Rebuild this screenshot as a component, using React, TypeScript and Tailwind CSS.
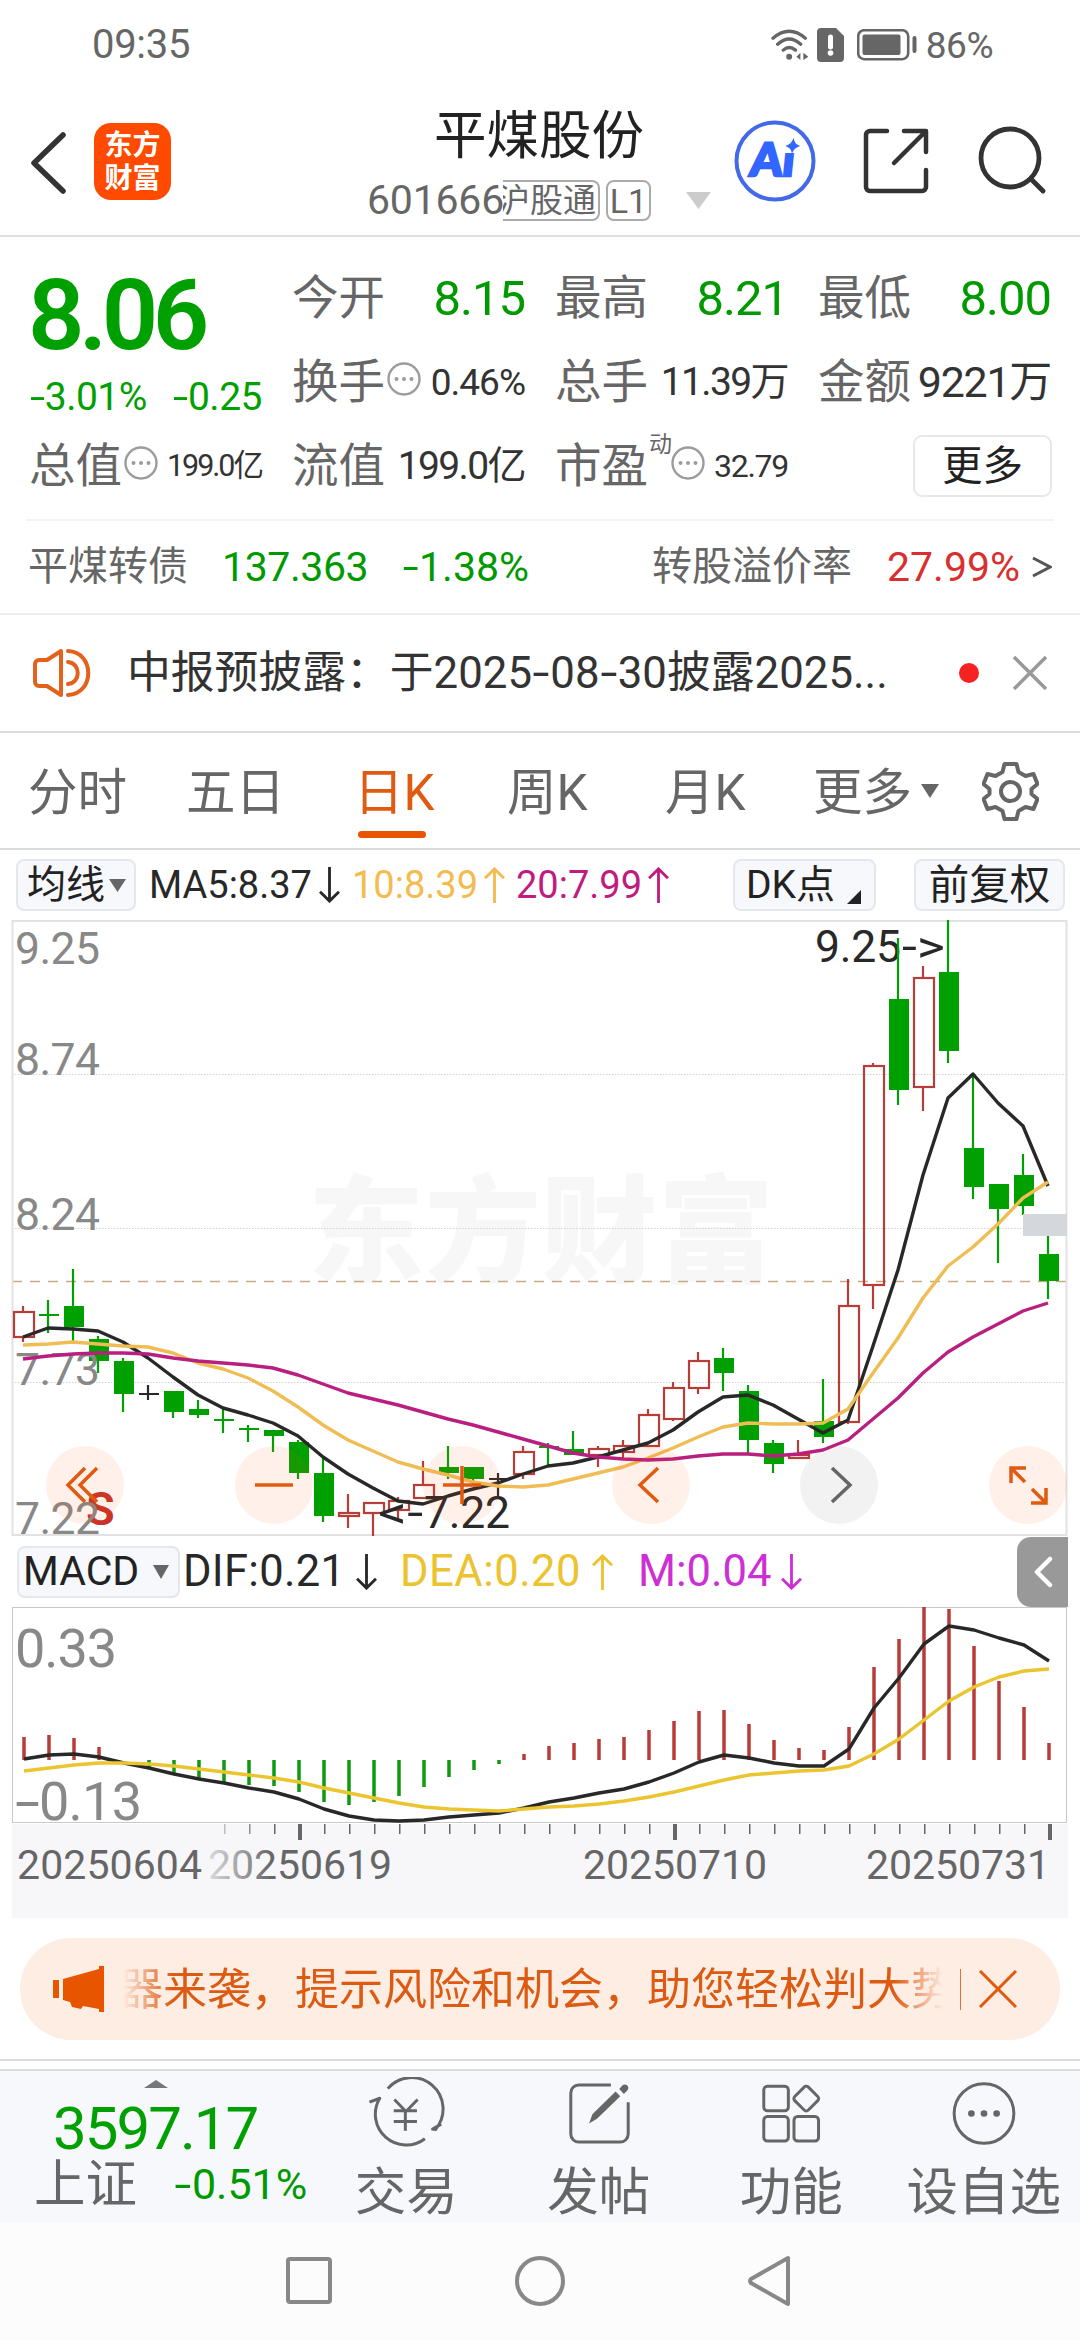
import clsx           from "clsx"
import { ReactNode } from "react"

type Candle = [ kind: "up" | "down" | "flat", high: number, top: number, bottom: number, low: number ]

const STEP = 25
const FIRST_X = 23
const GREEN = "#00a000"
const RED = "#b83c38"
const INK = "#282828"

// high wick, body top, body bottom, low wick
const candles: Candle[] = [
    [ "up", 1306, 1312, 1337, 1342 ],
    [ "down", 1300, 1314, 1316, 1333 ],
    [ "down", 1269, 1306, 1327, 1341 ],
    [ "down", 1336, 1339, 1361, 1373 ],
    [ "down", 1358, 1361, 1394, 1412 ],
    [ "flat", 1385, 1393, 1395, 1400 ],
    [ "down", 1391, 1391, 1412, 1418 ],
    [ "down", 1400, 1409, 1415, 1418 ],
    [ "down", 1409, 1419, 1421, 1433 ],
    [ "down", 1425, 1428, 1430, 1442 ],
    [ "down", 1430, 1430, 1436, 1452 ],
    [ "down", 1440, 1442, 1473, 1479 ],
    [ "down", 1458, 1473, 1516, 1522 ],
    [ "up", 1494, 1513, 1516, 1528 ],
    [ "up", 1503, 1503, 1513, 1536 ],
    [ "up", 1497, 1501, 1510, 1518 ],
    [ "up", 1461, 1485, 1498, 1498 ],
    [ "down", 1446, 1467, 1473, 1479 ],
    [ "down", 1467, 1467, 1479, 1485 ],
    [ "flat", 1473, 1478, 1480, 1497 ],
    [ "up", 1446, 1452, 1474, 1479 ],
    [ "down", 1443, 1446, 1448, 1465 ],
    [ "down", 1431, 1449, 1455, 1455 ],
    [ "up", 1446, 1449, 1455, 1467 ],
    [ "up", 1440, 1446, 1452, 1458 ],
    [ "up", 1409, 1415, 1446, 1446 ],
    [ "up", 1382, 1388, 1419, 1421 ],
    [ "up", 1352, 1361, 1388, 1394 ],
    [ "down", 1348, 1358, 1373, 1391 ],
    [ "down", 1385, 1391, 1440, 1455 ],
    [ "down", 1440, 1443, 1464, 1473 ],
    [ "up", 1440, 1455, 1458, 1458 ],
    [ "down", 1379, 1421, 1437, 1443 ],
    [ "up", 1279, 1306, 1422, 1424 ],
    [ "up", 1063, 1066, 1285, 1309 ],
    [ "down", 938, 999, 1090, 1105 ],
    [ "up", 966, 978, 1087, 1111 ],
    [ "down", 920, 972, 1051, 1063 ],
    [ "down", 1075, 1148, 1187, 1199 ],
    [ "down", 1184, 1184, 1209, 1263 ],
    [ "down", 1154, 1175, 1206, 1215 ],
    [ "down", 1236, 1254, 1281, 1299 ],
]

const ma5 = [ 1337, 1328, 1329, 1331, 1342, 1358, 1377, 1395, 1408, 1415, 1423, 1436, 1457, 1474, 1488, 1501, 1504, 1496, 1489, 1483, 1474, 1466, 1463, 1457, 1450, 1443, 1430, 1412, 1397, 1395, 1405, 1419, 1433, 1420, 1346, 1270, 1175, 1098, 1074, 1103, 1126, 1186 ]
const ma10 = [ 1345, 1344, 1342, 1344, 1346, 1347, 1353, 1363, 1369, 1378, 1391, 1407, 1425, 1440, 1451, 1462, 1469, 1475, 1482, 1486, 1487, 1485, 1479, 1473, 1467, 1458, 1448, 1437, 1427, 1423, 1424, 1424, 1423, 1409, 1373, 1338, 1298, 1266, 1247, 1224, 1198, 1182 ]
const ma20 = [ 1359, 1356, 1354, 1353, 1353, 1354, 1358, 1361, 1363, 1365, 1368, 1375, 1384, 1393, 1399, 1405, 1412, 1419, 1425, 1432, 1439, 1446, 1453, 1457, 1459, 1460, 1459, 1456, 1454, 1454, 1456, 1454, 1450, 1440, 1419, 1398, 1373, 1352, 1337, 1324, 1311, 1303 ]

const ZERO = 1760
const macd = [ 1737, 1735, 1738, 1747, 1760, 1768, 1774, 1780, 1782, 1785, 1786, 1792, 1802, 1805, 1802, 1796, 1787, 1777, 1770, 1764, 1754, 1746, 1743, 1739, 1737, 1730, 1721, 1711, 1710, 1724, 1740, 1748, 1750, 1727, 1667, 1639, 1607, 1609, 1646, 1681, 1707, 1743 ]
const dif = [ 1759, 1755, 1754, 1757, 1763, 1768, 1774, 1779, 1783, 1788, 1792, 1799, 1809, 1816, 1820, 1821, 1820, 1817, 1815, 1813, 1808, 1802, 1798, 1793, 1789, 1782, 1773, 1762, 1755, 1758, 1763, 1766, 1766, 1749, 1708, 1678, 1644, 1626, 1630, 1638, 1645, 1661 ]
const dea = [ 1771, 1768, 1765, 1763, 1763, 1764, 1766, 1769, 1772, 1775, 1778, 1782, 1788, 1793, 1798, 1803, 1807, 1809, 1810, 1811, 1809, 1807, 1806, 1804, 1801, 1797, 1792, 1786, 1780, 1775, 1773, 1771, 1770, 1766, 1754, 1739, 1720, 1701, 1687, 1677, 1671, 1669 ]

const toPoints = (values: number[], start = FIRST_X) => values.map((y, i) => `${ start + i * STEP },${ y }`).join(" ")

// Roboto's hyphen is short next to its figures, so it is stretched a little
function Dash() {
    return <span className="mx-[0.07em] inline-block scale-x-140">-</span>
}

function Arrow({ up = false, className }: Readonly<{ up?: boolean; className?: string }>) {
    return (
        <svg viewBox="0 0 22 38" fill="none" stroke="currentColor" strokeWidth="3" className={ clsx("h-[36px] w-[21px] shrink-0", className) }>
            <path d={ up ? "M11 38V2M1 12 11 2l10 10" : "M11 0v36M1 26l10 10 10-10" } />
        </svg>
    )
}

function Caret({ className }: Readonly<{ className?: string }>) {
    return (
        <svg viewBox="0 0 18 14" fill="currentColor" preserveAspectRatio="none" className={ clsx("shrink-0", className) }>
            <path d="M0 0h18L9 14z" />
        </svg>
    )
}

function Dots() {
    return (
        <svg viewBox="0 0 34 34" className="-mt-[6px] ml-[2px] size-[34px] shrink-0">
            <circle cx="17" cy="17" r="15.5" fill="none" stroke="#9c9c9c" strokeWidth="2.4" />
            <g fill="#9c9c9c">
                <circle cx="9.5" cy="17" r="2" />
                <circle cx="17" cy="17" r="2" />
                <circle cx="24.5" cy="17" r="2" />
            </g>
        </svg>
    )
}

function StatusBar() {
    return (
        <div className="flex h-[90px] items-center justify-between pr-[87px] pl-[92px] text-[#666]">
            <span className="text-[40px] tracking-[-0.3px]">09:35</span>
            <div className="flex items-center">
                <svg viewBox="0 0 110 100" className="h-[33px] w-[37px]" fill="none" stroke="currentColor" strokeWidth="10" strokeLinecap="round">
                    <path d="M5 28Q54-14 103 28M19 46Q54 14 89 46M36 64Q54 48 73 64" />
                    <circle cx="54" cy="84" r="9" fill="currentColor" stroke="none" />
                    <path d="M76 84l12-12v22zM112 84 97 72v22z" fill="currentColor" stroke="none" />
                </svg>
                <svg viewBox="0 0 27 34" className="ml-[9px] h-[34px] w-[27px]">
                    <path d="M4 0h15l8 8v22a4 4 0 0 1-4 4H4a4 4 0 0 1-4-4V4a4 4 0 0 1 4-4z" fill="currentColor" />
                    <path d="M13.500 9v10" stroke="white" strokeWidth="5" strokeLinecap="round" />
                    <circle cx="13.500" cy="25" r="2.800" fill="white" />
                </svg>
                <svg viewBox="0 0 60 32" className="ml-[13px] h-[32px] w-[60px]">
                    <rect x="1.200" y="1.200" width="50" height="29" rx="6" fill="none" stroke="currentColor" strokeWidth="2.600" />
                    <rect x="5.500" y="5.500" width="38" height="20.500" rx="2" fill="currentColor" />
                    <path d="M57.500 9v13" stroke="currentColor" strokeWidth="4" strokeLinecap="round" />
                </svg>
                <span className="ml-[9px] text-[37px] tracking-[-0.5px]">86%</span>
            </div>
        </div>
    )
}

function Header() {
    return (
        <header className="flex h-[147px] items-start border-b-2 border-[#dedede]">
            <svg viewBox="0 0 36 62" className="mt-[42px] ml-[30px] h-[62px] w-[36px]" fill="none" stroke="#333" strokeWidth="5.500" strokeLinecap="round" strokeLinejoin="round">
                <path d="M33 3 4 31l29 28" />
            </svg>
            <div className="mt-[33px] ml-[28px] flex size-[77px] flex-col items-center justify-center rounded-[17px] bg-[#ff4a00] text-[28px] leading-[33px] font-bold text-white">
                <span>东方</span>
                <span>财富</span>
            </div>
            <div className="mt-[17px] ml-[196px] flex w-[344px] flex-col items-center">
                <h1 className="text-[52.5px] leading-[58px] text-[#222]">平煤股份</h1>
                <div className="mt-[15px] flex w-full items-center text-[#666]">
                    <span className="w-[136px] text-[41px] whitespace-nowrap tracking-[-0.2px]">601666</span>
                    <span className="flex h-[41px] w-[97px] items-center justify-end overflow-hidden rounded-r-[8px] border-2 border-l-0 border-[#aaa] pr-[2px] text-[33px] whitespace-nowrap">沪股通</span>
                    <span className="ml-[6px] flex h-[41px] w-[45px] items-center justify-center rounded-[8px] border-2 border-[#aaa] text-[34px]">L1</span>
                    <Caret className="ml-auto h-[17px] w-[25px] text-[#ccc]" />
                </div>
            </div>
            <svg viewBox="0 0 82 82" className="mt-[30px] ml-[23px] size-[82px]">
                <circle cx="41" cy="41" r="38.5" fill="none" stroke="#4169e8" strokeWidth="4" />
                <g transform="translate(6 0) skewX(-6)" fill="#3366ff">
                    <text x="15" y="56.5" textLength="44" lengthAdjust="spacingAndGlyphs" stroke="#3366ff" strokeWidth="2.500" className="font-[Lato] text-[46px] font-black">Ai</text>
                    <path d="M46.500 17h15v16h-15z" fill="white" />
                    <path d="M55.500 19.500q1.500 5 6 6.500-4.500 1.500-6 6-1.500-4.500-6-6 4.500-1.500 6-6.500z" stroke="#3366ff" />
                </g>
            </svg>
            <svg viewBox="0 0 66 66" className="mt-[38px] ml-[47px] size-[66px]" fill="none" stroke="#333" strokeWidth="4.500" strokeLinecap="round" strokeLinejoin="round">
                <path d="M24 3H7a4 4 0 0 0-4 4v52a4 4 0 0 0 4 4h52a4 4 0 0 0 4-4V42M41 3h22v21M62 4 31 35" />
            </svg>
            <svg viewBox="0 0 68 68" className="mt-[36px] ml-[49px] size-[68px]" fill="none" stroke="#333" strokeWidth="4.800" strokeLinecap="round">
                <circle cx="32" cy="32" r="29" />
                <path d="m53 53 12 12" />
            </svg>
        </header>
    )
}

function Cell({ label, value, className, color = "text-[#333]" }: Readonly<{ label: ReactNode; value: string; className: string; color?: string }>) {
    return (
        <div className="flex h-[84px] items-center justify-between whitespace-nowrap">
            <span className="flex items-center text-[46.5px] text-[#666]">{ label }</span>
            <span className={ clsx(color, className) }>{ value }</span>
        </div>
    )
}

function Quote() {
    return (
        <section className="px-[29px]">
            <div className="grid grid-cols-[233px_233px_233px_233px] gap-x-[30px] pt-[19px]">
                <div className="row-span-2 flex flex-col text-[#00a000]">
                    <strong className="mt-[10px] -ml-px text-[99px] font-semibold tracking-[-5.5px]">8.06</strong>
                    <div className="mt-[13px] flex justify-between text-[39px] tracking-[-0.5px]">
                        <span><Dash />3.01%</span>
                        <span><Dash />0.25</span>
                    </div>
                </div>
                <Cell label="今开" value="8.15" color="text-[#009a00]" className="text-[49px] tracking-[-1px]" />
                <Cell label="最高" value="8.21" color="text-[#009a00]" className="text-[49px] tracking-[-1px]" />
                <Cell label="最低" value="8.00" color="text-[#009a00]" className="text-[49px] tracking-[-1px]" />
                <Cell label={ <>换手<Dots /></> } value="0.46%" className="text-[37px] tracking-[-1px]" />
                <Cell label="总手" value="11.39万" className="text-[39px] tracking-[-1.600px]" />
                <Cell label="金额" value="9221万" className="text-[43px] tracking-[-1.300px]" />
                <Cell label={ <>总值<Dots /></> } value="199.0亿" className="text-[30.500px] tracking-[-2px]" />
                <Cell label="流值" value="199.0亿" className="text-[39px] tracking-[-1.600px]" />
                <Cell label={ <>市盈<small className="-mr-[3px] -mt-[44px] ml-px text-[23px]">动</small><Dots /></> } value="32.79" className="text-[32px] tracking-[-1.3px]" />
                <div className="flex items-center justify-end">
                    <button type="button" className="-mr-px h-[62px] w-[139px] rounded-[9px] border-2 border-[#e8e8e8] text-[40.5px] text-[#222]">更多</button>
                </div>
            </div>
            <div className="-mx-[3px] mt-[11px] h-[2px] bg-[#f4f4f4]" />
            <div className="flex h-[92px] items-center text-[40px] whitespace-nowrap text-[#666]">
                <span className="-ml-px">平煤转债</span>
                <span className="ml-[34px] w-[146px] text-[41px] tracking-[-0.4px] text-[#009a00]">137.363</span>
                <span className="ml-[34px] text-[41px] text-[#009a00]"><Dash />1.38%</span>
                <span className="ml-auto">转股溢价率</span>
                <span className="ml-[35px] text-[41px] text-[#d83030]">27.99%</span>
                <svg viewBox="0 0 20 22" className="-mr-px ml-[12px] h-[22px] w-[20px]" fill="none" stroke="#555" strokeWidth="3">
                    <path d="m1 2 17 9-17 9" />
                </svg>
            </div>
        </section>
    )
}

function Notice() {
    return (
        <div className="flex h-[120px] items-center border-y-2 border-t-[#eeeeee] border-b-[#dcdcdc] pr-[33px] pl-[33px]">
            <svg viewBox="0 0 58 50" className="h-[50px] w-[58px] shrink-0" fill="none" stroke="#e2611c" strokeWidth="4" strokeLinejoin="round" strokeLinecap="round">
                <path d="M28 3v44L14 38H6a4 4 0 0 1-4-4V16a4 4 0 0 1 4-4h8z" />
                <path d="M35 3c27 1 27 43 0 44M35 14c13 1 13 21 0 22" />
            </svg>
            <p className="ml-[36px] w-[770px] pt-[2px] text-[43.8px] whitespace-nowrap text-[#333]">中报预披露：于2025<Dash />08<Dash />30披露2025...</p>
            <span className="ml-auto size-[20px] rounded-full bg-[#f52222]" />
            <svg viewBox="0 0 34 34" className="ml-[34px] size-[34px]" stroke="#999" strokeWidth="3.500">
                <path d="m1 1 32 32M33 1 1 33" />
            </svg>
        </div>
    )
}

const tabs = [
    { label: "分时", className: "ml-[28px] w-[158px]" },
    { label: "五日", className: "w-[168px]" },
    { label: "日K", className: "w-[153px]", active: true },
    { label: "周K", className: "w-[158px]" },
    { label: "月K", className: "w-[148px]" },
]

function Tabs() {
    return (
        <nav className="flex h-[117px] items-center border-b-2 border-[#dcdcdc] text-[49.5px] text-[#666]">
            { tabs.map(tab => (
                <div key={ tab.label } className={ clsx("shrink-0 pt-[7px]", tab.className, tab.active && "text-[#e05a10]") }>
                    <span className="relative">
                        { tab.label }
                        { tab.active && <span className="absolute -bottom-[16px] left-[4px] h-[7px] w-[68px] rounded-full bg-[#e85500]" /> }
                    </span>
                </div>
            )) }
            <span className="pt-[7px]">更多</span>
            <Caret className="ml-[9px] h-[14px] w-[18px]" />
            <svg viewBox="0 0 56 60" className="ml-[43px] h-[60px] w-[57px]" fill="none" stroke="currentColor" strokeWidth="4" strokeLinejoin="round">
                <path d="M22 3h12l2 8 7 4 8-2 4 10-6 5v5l6 5-4 10-8-2-7 4-2 8H22l-2-8-7-4-8 2-4-10 6-5v-5l-6-5 4-10 8 2 7-4z" />
                <circle cx="28" cy="30.500" r="9.500" />
            </svg>
        </nav>
    )
}

function ChartButton({ children, muted = false }: Readonly<{ children: ReactNode; muted?: boolean }>) {
    return (
        <button type="button" className={ clsx("size-[78px] rounded-full", muted ? "bg-[#808080]/10 text-[#666]" : "bg-[#ff5a10]/9 text-[#e05a10]") }>
            <svg viewBox="0 0 78 78" fill="none" stroke="currentColor" strokeWidth="3.5">{ children }</svg>
        </button>
    )
}

function MovingAverages() {
    return (
        <div className="flex h-[70px] items-center text-[38px] whitespace-nowrap">
            <button type="button" className="ml-[16px] flex h-[52px] w-[120px] items-center rounded-[8px] border-2 border-[#e4e7ec] bg-[#f7f8fb] pl-[9px] text-[39px] text-[#222]">
                均线<Caret className="ml-[4px] h-[13px] w-[17px] text-[#666]" />
            </button>
            <span className="ml-[13px] w-[170px] text-[#282828]">MA5:8.37</span>
            <Arrow className="text-[#282828]" />
            <span className="ml-[12px] w-[132px] text-[#f3bb50]">10:8.39</span>
            <Arrow up className="text-[#f3bb50]" />
            <span className="ml-[11px] w-[132px] text-[#c01c80]">20:7.99</span>
            <Arrow up className="text-[#c01c80]" />
            <button type="button" className="ml-auto flex h-[52px] w-[143px] items-center rounded-[8px] border-2 border-[#e4e7ec] bg-[#f7f8fb] pl-[11px] text-[39px] text-[#222]">
                DK点
                <svg viewBox="0 0 14 14" className="mt-[24px] ml-[12px] size-[14px] shrink-0"><path d="M14 0v14H0z" fill="#222" /></svg>
            </button>
            <button type="button" className="mr-[15px] ml-[38px] h-[52px] w-[151px] rounded-[8px] border-2 border-[#e4e7ec] bg-[#f7f8fb] text-[40.500px] text-[#222]">前复权</button>
        </div>
    )
}

function CandleChart() {
    return (
        <div className="relative h-[616px]">
            <svg viewBox="0 920 1080 616" className="h-[616px] w-[1080px]" fill="none">
                <text x="308" y="1273" textLength="466" fill="#f7f7f7" className="text-[116px] font-black">东方财富</text>
                <g stroke="#d2d2d2" strokeWidth="1" strokeDasharray="1.500 1.500">
                    <path d="M12 1074.500H1067M12 1228.500H1067M12 1382.500H1067" />
                </g>
                <path d="M12 1281.500H1067" stroke="#c9a982" strokeWidth="1.300" strokeDasharray="10 8" />
                <rect x="12.500" y="921" width="1054" height="614" stroke="#e2e2e2" strokeWidth="2" />
                <g fill={ INK } className="text-[44.500px]">
                    <text x="815" y="962" textLength="86">9.25</text>
                    <text x="902" y="962" textLength="43" lengthAdjust="spacingAndGlyphs">-&gt;</text>
                </g>
                { candles.map(([ kind, high, top, bottom, low ], i) => {
                    const x = FIRST_X + i * STEP
                    if (kind === "up") {
                        return (
                            <g key={ i } stroke={ RED } strokeWidth="2.200">
                                <path d={ `M${ x } ${ high }V${ top }M${ x } ${ bottom }V${ low }` } />
                                <rect x={ x - 9 } y={ top } width="20" height={ bottom - top } />
                            </g>
                        )
                    }
                    const color = kind === "down" ? GREEN : INK
                    return (
                        <g key={ i }>
                            <path d={ `M${ x } ${ high }V${ low }` } stroke={ color } strokeWidth="2.200" />
                            <rect x={ x - 9 } y={ top } width="20" height={ bottom - top } fill={ color } />
                        </g>
                    )
                }) }
                <rect x="1023" y="1214" width="44" height="22" fill="#d4d7dc" />
                <g fill="#888" className="text-[44.500px]">
                    <text x="15" y="964" textLength="85">9.25</text>
                    <text x="15" y="1075" textLength="85">8.74</text>
                    <text x="15" y="1230" textLength="85">8.24</text>
                    <text x="15" y="1385" textLength="85">7.73</text>
                </g>
                <g strokeWidth="3.400" strokeLinejoin="round">
                    <polyline points={ toPoints(ma5) } stroke={ INK } />
                    <polyline points={ toPoints(ma10) } stroke="#f0bd55" />
                    <polyline points={ toPoints(ma20) } stroke="#b91f7e" />
                </g>
                <text x="86" y="1525" fill="#c83228" className="text-[47px] font-semibold">S</text>
                <text x="15" y="1534" textLength="85" fill="#888" className="text-[44.500px]">7.22</text>
                <g fill={ INK } className="text-[44.500px]">
                    <text x="378" y="1528" textLength="45" lengthAdjust="spacingAndGlyphs">&lt;-</text>
                    <text x="424" y="1528" textLength="86">7.22</text>
                </g>
            </svg>
            <div className="absolute right-[13px] bottom-[12px] left-[46px] flex justify-between">
                <ChartButton><path d="M39 22 22 39l17 17M51 22 34 39l17 17" /></ChartButton>
                <ChartButton><path d="M20 39h38" /></ChartButton>
                <ChartButton><path d="M20 39h38M39 20v38" /></ChartButton>
                <ChartButton><path d="M46 22 28 39l18 17" /></ChartButton>
                <ChartButton muted><path d="m32 22 18 17-18 17" /></ChartButton>
                <ChartButton><path d="M37 22H22v15M22 22l14 14M57 42v15H42M57 57 43 43" /></ChartButton>
            </div>
        </div>
    )
}

function MacdHeader() {
    return (
        <div className="flex h-[71px] items-center text-[43.500px] whitespace-nowrap">
            <button type="button" className="ml-[17px] flex h-[52px] w-[163px] items-center rounded-[8px] border-2 border-[#e4e7ec] bg-[#f7f8fb] pl-[4px] text-[41px] text-[#222]">
                MACD<Caret className="ml-auto mr-[9px] h-[14px] w-[16px] text-[#666]" />
            </button>
            <span className="ml-[3px] w-[173px] tracking-[0.3px] text-[#282828]">DIF:0.21</span>
            <Arrow className="text-[#282828]" />
            <span className="ml-[23px] w-[192px] tracking-[0.5px] text-[#ecc32e]">DEA:0.20</span>
            <Arrow up className="text-[#ecc32e]" />
            <span className="ml-[25px] w-[143px] text-[#cc30d4]">M:0.04</span>
            <Arrow className="text-[#cc30d4]" />
            <button type="button" className="mr-[12px] ml-auto flex h-[70px] w-[51px] items-center justify-center rounded-l-[14px] bg-[#999]">
                <svg viewBox="0 0 20 32" className="h-[32px] w-[20px]" fill="none" stroke="white" strokeWidth="4.500" strokeLinecap="round" strokeLinejoin="round">
                    <path d="M17 3 4 16l13 13" />
                </svg>
            </button>
        </div>
    )
}

function MacdChart() {
    return (
        <svg viewBox="0 1607 1080 217" className="h-[217px] w-[1080px]" fill="none">
            <rect x="12.500" y="1607.500" width="1054" height="215" stroke="#c8c8c8" />
            { macd.map((y, i) => (
                <path key={ i } d={ `M${ 24 + i * STEP } ${ ZERO }V${ y }` } stroke={ y < ZERO ? RED : "#109810" } strokeWidth="3.500" />
            )) }
            <g fill="#888" className="text-[54px]">
                <text x="15" y="1667" textLength="102">0.33</text>
                <text x="15" y="1820" textLength="25" lengthAdjust="spacingAndGlyphs">-</text>
                <text x="39" y="1820" textLength="103">0.13</text>
            </g>
            <g strokeWidth="3.400" strokeLinejoin="round">
                <polyline points={ toPoints(dif, 24) } stroke={ INK } />
                <polyline points={ toPoints(dea, 24) } stroke="#eac530" />
            </g>
        </svg>
    )
}

function DateAxis() {
    const ticks = Array.from({ length: 34 }, (_, i) => i + 8)
    return (
        <div className="mx-[12px] h-[94px] bg-[#f7f7fa]">
            <svg viewBox="12 1824 1056 94" className="h-[94px] w-[1056px]">
                <defs>
                    <linearGradient id="fade" gradientUnits="userSpaceOnUse" x1="205" x2="272" y1="0" y2="0">
                        <stop offset="0" stopColor="#666" stopOpacity="0.15" />
                        <stop offset="1" stopColor="#666" />
                    </linearGradient>
                </defs>
                { ticks.map(i => {
                    const major = i === 11 || i === 26 || i === 41
                    return <rect key={ i } x={ 24 + i * STEP - (major ? 1 : 0) } y="1824" width={ major ? 4 : 1.5 } height={ major ? 16 : 10 } fill={ i < 11 ? "url(#fade)" : "#666" } />
                }) }
                <g fill="#666" className="text-[41px]">
                    <text x="17" y="1879" textLength="185">20250604</text>
                    <text x="208" y="1879" textLength="184" fill="url(#fade)">20250619</text>
                    <text x="583" y="1879" textLength="184">20250710</text>
                    <text x="866" y="1879" textLength="184">20250731</text>
                </g>
            </svg>
        </div>
    )
}

function Banner() {
    return (
        <div className="mx-[20px] mt-[20px] flex h-[102px] items-center rounded-full bg-[#fdede3] text-[#dd5a12]">
            <svg viewBox="0 0 52 46" className="ml-[33px] h-[46px] w-[52px] shrink-0" fill="#e85500">
                <path d="M0 14h6v18H0zM10 13 46 3V0h5v46h-5v-3l-16-3-2 3-9-2-2-5-7-2z" />
            </svg>
            <p className="ml-[18px] w-[820px] overflow-hidden mask-x-from-94% mask-x-to-100% pt-[2px] text-[44px] leading-[60px] whitespace-nowrap">
                <span className="-ml-[4px]">器来袭，提示风险和机会，助您轻松判大势</span>
            </p>
            <span className="ml-[17px] h-[41px] w-px bg-[#e0703a]" />
            <svg viewBox="0 0 38 38" className="ml-[18px] size-[38px]" stroke="#e2580c" strokeWidth="3">
                <path d="m1 1 36 36M37 1 1 37" />
            </svg>
        </div>
    )
}

const actions = [
    {
        label: "交易",
        icon: <path d="M65 35A93 93 0 0 1 209 158l-9-1 26-15M10 76l31-12A93 93 0 0 0 177 186M85 68l35 36 35-36M83 102h70M83 134h70M118 104v58" />,
    },
    {
        label: "发帖",
        icon: (
            <>
                <path d="M156 24H59a24 24 0 0 0-24 24v124a24 24 0 0 0 24 24h125a24 24 0 0 0 24-24V76" />
                <path d="m90 140 10-28 70-68 14 14-70 68zM181 36l10-11c10-8 24 4 14 16l-10 10z" fill="currentColor" stroke="none" />
            </>
        ),
    },
    {
        label: "功能",
        icon: (
            <>
                <rect x="38" y="28" width="74" height="74" rx="11" />
                <rect x="38" y="119" width="74" height="74" rx="11" />
                <rect x="129" y="119" width="74" height="74" rx="11" />
                <rect x="137" y="36" width="58" height="58" rx="9" transform="rotate(45 166 65)" />
            </>
        ),
    },
    {
        label: "设自选",
        icon: (
            <>
                <circle cx="120" cy="110" r="90" />
                <path d="M82 110h.1M120 110h.1M158 110h.1" strokeWidth="20" strokeLinecap="round" />
            </>
        ),
    },
]

function BottomBar() {
    return (
        <>
            <div className="mt-[19px] h-[12px] border-y-2 border-[#dcdcdc]" />
            <footer className="flex h-[151px] bg-[#f6f8fb] text-[#666]">
                <div className="w-[310px] pt-[9px]">
                    <Caret className="ml-[144px] h-[8px] w-[24px] rotate-180 text-[#777]" />
                    <div className="mt-[11px] pl-[53px] text-[60px] tracking-[-2px] text-[#00a000]">3597.17</div>
                    <div className="flex items-center pl-[34px] whitespace-nowrap">
                        <span className="text-[51.5px]">上证</span>
                        <span className="ml-[37px] text-[43px] text-[#009a00]"><Dash />0.51%</span>
                    </div>
                </div>
                <div className="grid flex-1 grid-cols-[repeat(4,192.5px)]">
                    { actions.map(action => (
                        <div key={ action.label } className="flex flex-col items-center pt-[6px]">
                            <svg viewBox="0 0 240 220" className="h-[73px] w-[80px]" fill="none" stroke="currentColor" strokeWidth="9" strokeLinejoin="round">
                                { action.icon }
                            </svg>
                            <span className="mt-[17px] text-[51.5px] whitespace-nowrap">{ action.label }</span>
                        </div>
                    )) }
                </div>
            </footer>
        </>
    )
}

function SystemNav() {
    return (
        <div className="flex h-[118px] items-center bg-[#fcfcfc] pl-[285px]">
            <svg viewBox="0 0 506 52" className="h-[52px] w-[506px]" fill="none" stroke="#888" strokeWidth="4" strokeLinejoin="round">
                <rect x="3" y="4" width="42" height="43" rx="2" />
                <circle cx="255" cy="26" r="23" />
                <path d="M503 3v46L466 28q-2-2 0-4z" />
            </svg>
        </div>
    )
}

export default function App() {
    return (
        <main className="w-[1080px] bg-white font-['Roboto','Noto_Sans_CJK_SC',sans-serif] leading-none">
            <StatusBar />
            <Header />
            <Quote />
            <Notice />
            <Tabs />
            <MovingAverages />
            <CandleChart />
            <MacdHeader />
            <MacdChart />
            <DateAxis />
            <Banner />
            <BottomBar />
            <SystemNav />
        </main>
    )
}
